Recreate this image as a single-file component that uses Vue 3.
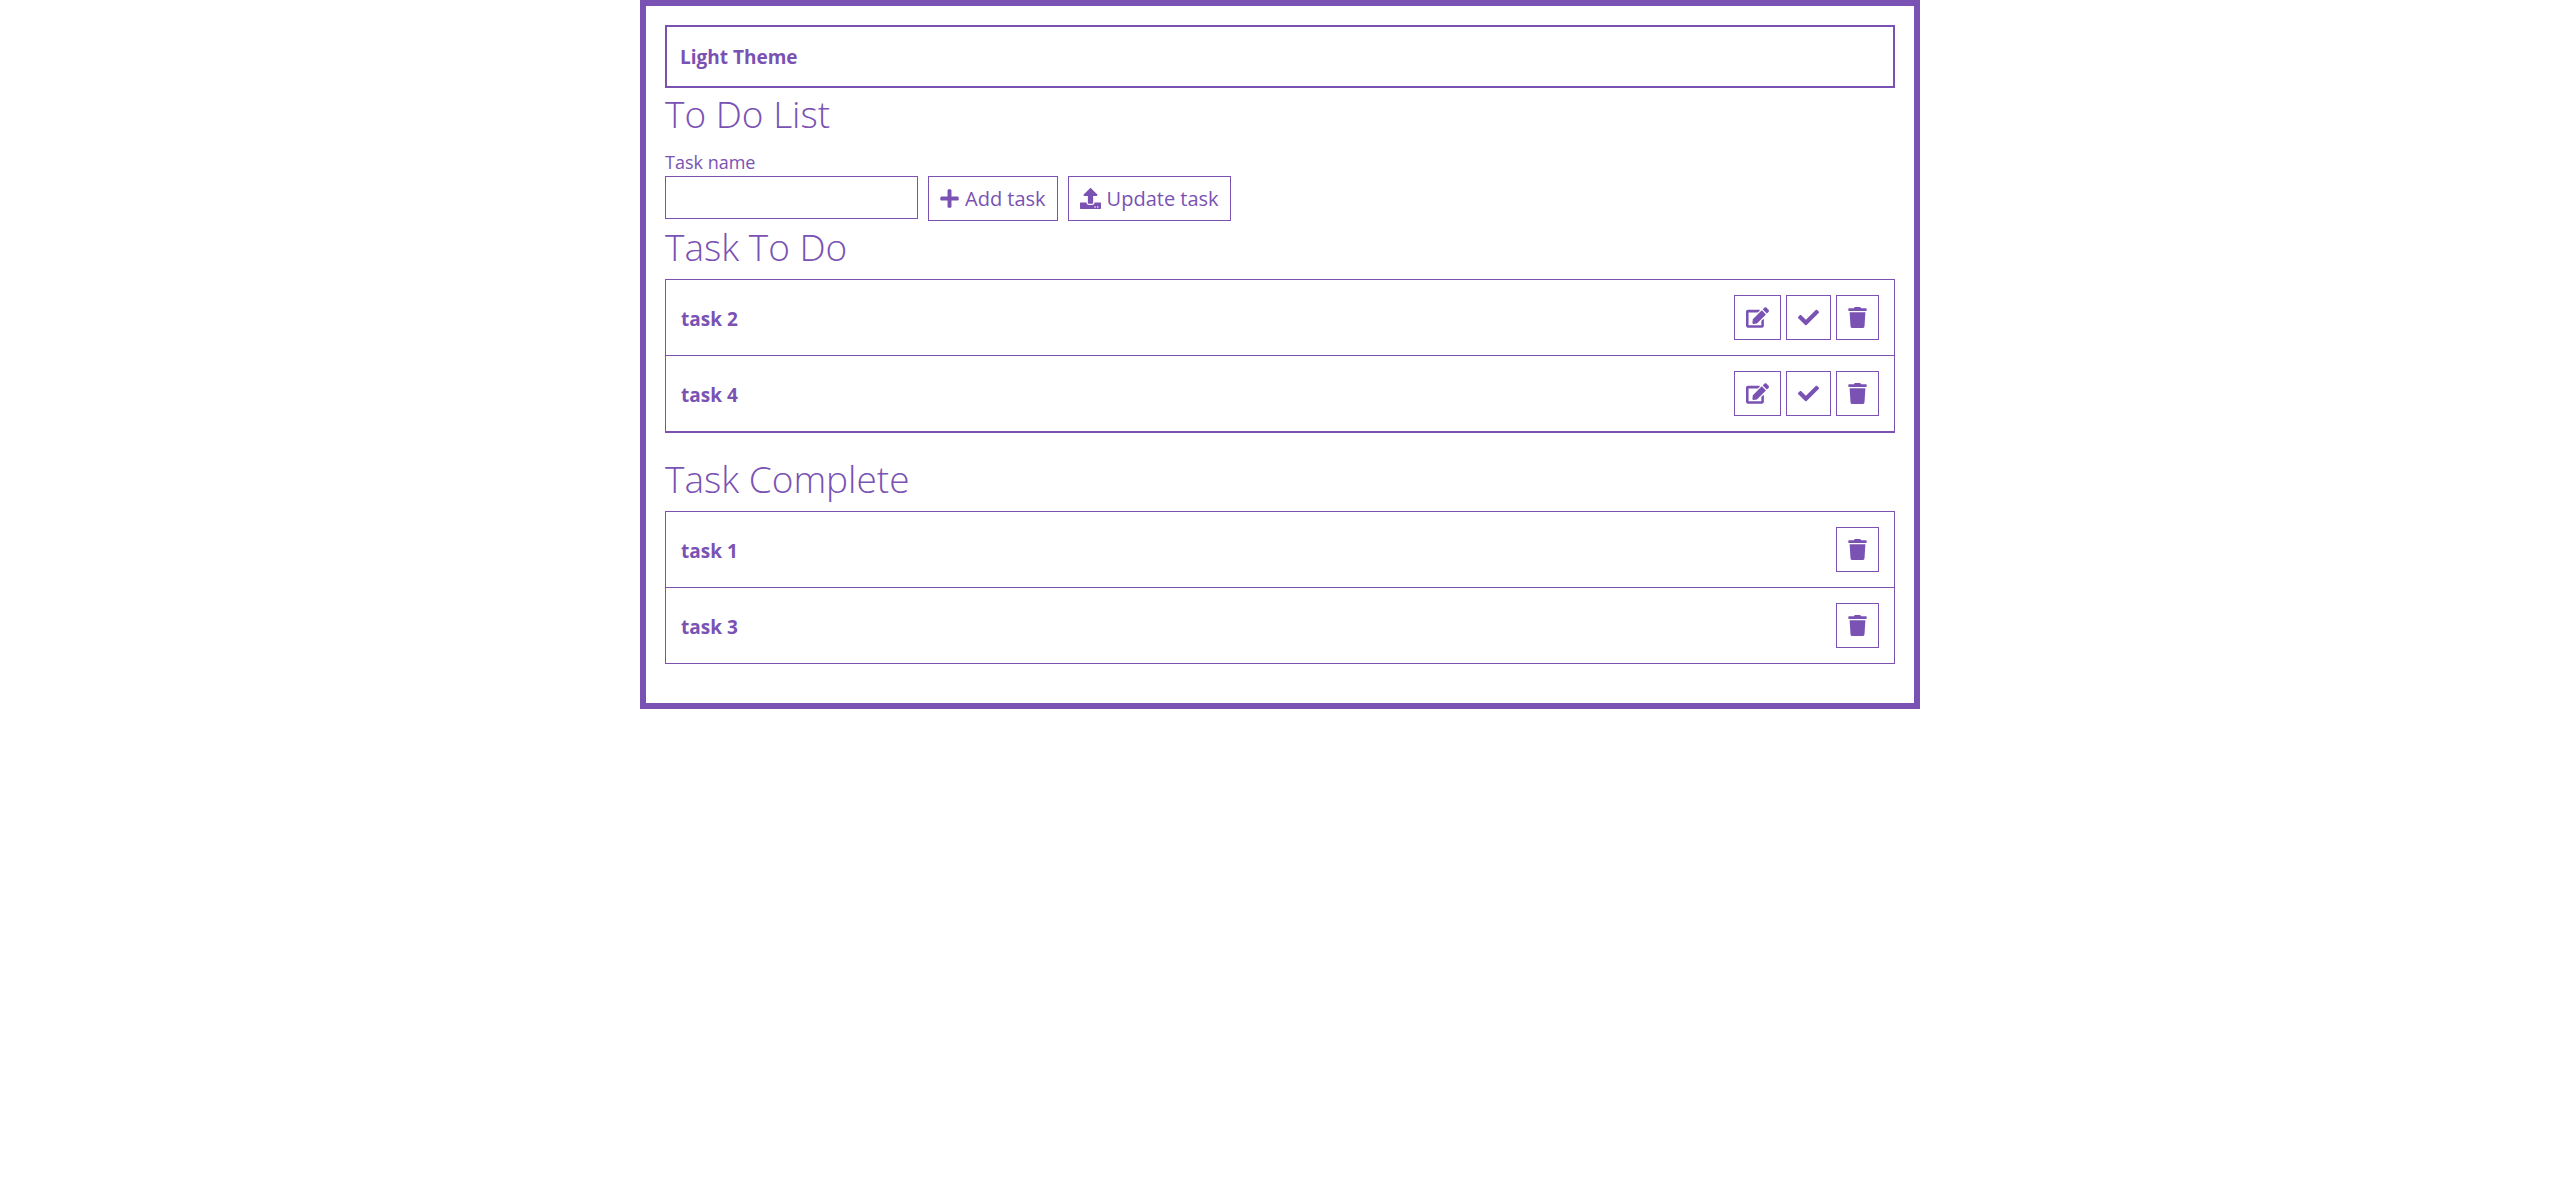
<script setup>
import { ref } from 'vue'

const icons = {
  plus: {
    box: '0 0 448 512',
    path: 'M416 208H272V64c0-17.67-14.33-32-32-32h-32c-17.67 0-32 14.33-32 32v144H32c-17.67 0-32 14.33-32 32v32c0 17.67 14.33 32 32 32h144v144c0 17.67 14.33 32 32 32h32c17.67 0 32-14.33 32-32V304h144c17.67 0 32-14.33 32-32v-32c0-17.67-14.33-32-32-32z'
  },
  upload: {
    box: '0 0 512 512',
    path: 'M296 384h-80c-13.3 0-24-10.7-24-24V192h-87.7c-17.8 0-26.7-21.5-14.1-34.1L242.3 5.7c7.5-7.5 19.8-7.5 27.3 0l152.2 152.2c12.6 12.6 3.7 34.1-14.1 34.1H320v168c0 13.3-10.7 24-24 24zm216-8v112c0 13.3-10.7 24-24 24H24c-13.3 0-24-10.7-24-24V376c0-13.3 10.7-24 24-24h136v8c0 30.9 25.1 56 56 56h80c30.9 0 56-25.1 56-56v-8h136c13.3 0 24 10.7 24 24zm-124 88c0-11-9-20-20-20s-20 9-20 20 9 20 20 20 20-9 20-20zm64 0c0-11-9-20-20-20s-20 9-20 20 9 20 20 20 20-9 20-20z'
  },
  edit: {
    box: '0 0 576 512',
    path: 'M402.6 83.2l90.2 90.2c3.8 3.8 3.8 10 0 13.8L274.4 405.6l-92.8 10.3c-12.4 1.4-22.9-9.1-21.5-21.5l10.3-92.8L388.8 83.2c3.8-3.8 10-3.8 13.8 0zm162-22.9l-48.8-48.8c-15.2-15.2-39.9-15.2-55.2 0l-35.4 35.4c-3.8 3.8-3.8 10 0 13.8l90.2 90.2c3.8 3.8 10 3.8 13.8 0l35.4-35.4c15.2-15.3 15.2-40 0-55.2zM384 346.2V448H64V128h229.8c3.2 0 6.2-1.3 8.5-3.5l40-40c7.6-7.6 2.2-20.5-8.5-20.5H48C21.5 64 0 85.5 0 112v352c0 26.5 21.5 48 48 48h352c26.5 0 48-21.5 48-48V306.2c0-10.7-12.9-16-20.5-8.5l-40 40c-2.2 2.3-3.5 5.3-3.5 8.5z'
  },
  check: {
    box: '0 0 512 512',
    path: 'M173.898 439.404l-166.4-166.4c-9.997-9.997-9.997-26.206 0-36.204l36.203-36.204c9.997-9.998 26.207-9.998 36.204 0L192 312.69 432.095 72.596c9.997-9.997 26.207-9.997 36.204 0l36.203 36.204c9.997 9.997 9.997 26.206 0 36.204l-294.4 294.401c-9.998 9.997-26.207 9.997-36.204-.001z'
  },
  trash: {
    box: '0 0 448 512',
    path: 'M432 32H312l-9.4-18.7A24 24 0 0 0 281.1 0H166.8a23.72 23.72 0 0 0-21.4 13.3L136 32H16A16 16 0 0 0 0 48v32a16 16 0 0 0 16 16h416a16 16 0 0 0 16-16V48a16 16 0 0 0-16-16zM53.2 467a48 48 0 0 0 47.9 45h245.8a48 48 0 0 0 47.9-45L416 128H32z'
  }
}

const theme = ref('light')
const taskName = ref('')
const editing = ref(null)
const tasks = ref([
  { id: 1, name: 'task 1', done: true },
  { id: 2, name: 'task 2', done: false },
  { id: 3, name: 'task 3', done: true },
  { id: 4, name: 'task 4', done: false }
])

const sections = [
  { title: 'Task To Do', done: false, actions: ['edit', 'check', 'trash'] },
  { title: 'Task Complete', done: true, actions: ['trash'] }
]

const labels = { edit: 'Edit', check: 'Complete', trash: 'Delete' }

function addTask() {
  const name = taskName.value.trim()
  if (!name) return
  tasks.value.push({ id: Date.now(), name, done: false })
  taskName.value = ''
}

function updateTask() {
  if (!editing.value) return
  editing.value.name = taskName.value
  editing.value = null
  taskName.value = ''
}

function run(action, task) {
  if (action === 'edit') {
    editing.value = task
    taskName.value = task.name
  } else if (action === 'check') {
    task.done = true
  } else {
    tasks.value = tasks.value.filter((t) => t.id !== task.id)
  }
}
</script>

<template>
  <main class="container">
    <select v-model="theme" class="theme" aria-label="Theme">
      <option value="light">Light Theme</option>
    </select>

    <h1 class="heading">To Do List</h1>
    <form class="form" @submit.prevent="addTask">
      <div class="field">
        <label for="task-name">Task name</label>
        <input id="task-name" v-model="taskName" type="text" />
      </div>
      <button type="submit" class="button">
        <svg class="icon plus" :viewBox="icons.plus.box" aria-hidden="true"><path :d="icons.plus.path" /></svg>
        Add task
      </button>
      <button type="button" class="button" @click="updateTask">
        <svg class="icon upload" :viewBox="icons.upload.box" aria-hidden="true"><path :d="icons.upload.path" /></svg>
        Update task
      </button>
    </form>

    <section v-for="s in sections" :key="s.title" class="section">
      <h2 class="heading">{{ s.title }}</h2>
      <table class="table" :class="{ open: !s.done }">
        <tbody>
          <tr v-for="task in tasks.filter((t) => t.done === s.done)" :key="task.id">
            <th scope="row">{{ task.name }}</th>
            <td>
              <div class="actions">
                <button
                  v-for="a in s.actions"
                  :key="a"
                  type="button"
                  class="button"
                  :aria-label="labels[a] + ' ' + task.name"
                  @click="run(a, task)"
                >
                  <svg class="icon" :class="a" :viewBox="icons[a].box" aria-hidden="true"><path :d="icons[a].path" /></svg>
                </button>
              </div>
            </td>
          </tr>
        </tbody>
      </table>
    </section>
  </main>
</template>

<style>
body {
  background: #fff;
}
</style>

<style scoped>
.container,
.container * {
  box-sizing: border-box;
}

.container {
  width: 50%;
  margin: 0 auto;
  padding: 19px;
  border: 6px solid #7952b3;
  color: #7952b3;
  font-family: "Open Sans", "Noto Sans", sans-serif;
  font-size: 19px;
  line-height: 30px;
}

.theme {
  display: block;
  width: 100%;
  height: 63px;
  padding: 0 13px;
  border: 2px solid #7952b3;
  border-radius: 0;
  background: #fff;
  color: inherit;
  font: inherit;
  font-weight: 700;
  appearance: none;
}

.heading {
  margin: 0 0 6px;
  font-size: 37px;
  font-weight: 300;
  line-height: 52px;
}

.form {
  display: flex;
  align-items: flex-end;
  gap: 10px;
}

.field {
  display: flex;
  flex-direction: column;
  height: 75px;
}

.field label {
  padding-top: 2px;
  font-size: 18px;
  line-height: 28px;
}

.field input {
  width: 253px;
  height: 43px;
  padding: 0 10px;
  border: 1px solid #7952b3;
  border-radius: 0;
  background: #fff;
  color: inherit;
  font: inherit;
}

.button {
  display: flex;
  align-items: center;
  gap: 6px;
  height: 45px;
  padding: 0 11px;
  border: 1px solid #7952b3;
  background: #fff;
  color: inherit;
  font: inherit;
  font-size: 20px;
  white-space: nowrap;
  cursor: pointer;
}

.icon {
  flex: none;
  width: 21px;
  height: 21px;
  fill: currentColor;
}

.icon.plus,
.icon.trash {
  width: 19px;
}

.icon.edit {
  width: 23px;
}

.section {
  margin-bottom: 20px;
}

.table {
  width: 100%;
  border: 1px solid #7952b3;
  border-spacing: 0;
}

.table.open {
  border-bottom-width: 2px;
}

.table th,
.table td {
  padding: 15px;
}

.table th {
  padding: 16px 15px 14px;
  font-weight: 700;
  text-align: left;
}

.table tr + tr th,
.table tr + tr td {
  border-top: 1px solid #7952b3;
}

.actions {
  display: flex;
  justify-content: flex-end;
  gap: 5px;
}
</style>
